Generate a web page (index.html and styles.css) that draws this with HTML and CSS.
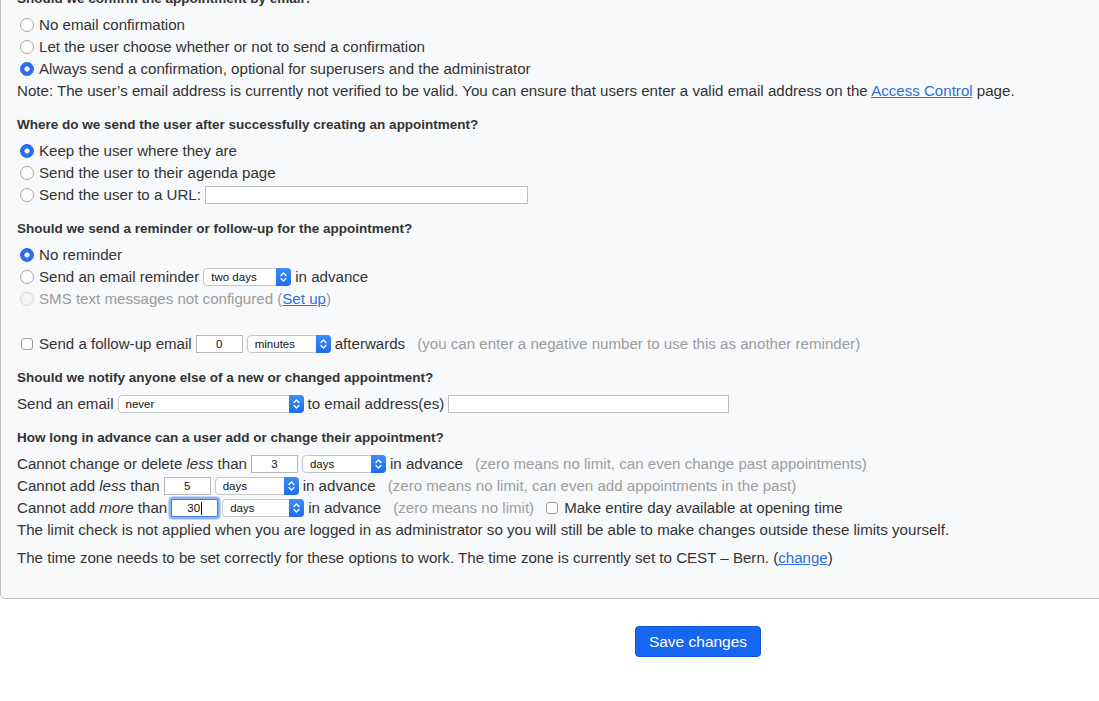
FILE: index.html
```html
<!DOCTYPE html>
<html lang="en">
<head>
<meta charset="utf-8">
<title>Appointment settings</title>
<link rel="stylesheet" href="styles.css">
</head>
<body>
<div class="page">
  <form class="box">
    <section class="sec">
      <h3 class="q">Should we confirm the appointment by email?</h3>
      <label class="row"><input type="radio" name="conf" class="rd"><span>No email confirmation</span></label>
      <label class="row"><input type="radio" name="conf" class="rd"><span>Let the user choose whether or not to send a confirmation</span></label>
      <label class="row"><input type="radio" name="conf" class="rd" checked><span>Always send a confirmation, optional for superusers and the administrator</span></label>
      <div class="row"><span>Note: The user’s email address is currently not verified to be valid. You can ensure that users enter a valid email address on the <a href="#" class="lnk">Access Control</a> page.</span></div>
    </section>

    <section class="sec">
      <h3 class="q">Where do we send the user after successfully creating an appointment?</h3>
      <label class="row"><input type="radio" name="dest" class="rd" checked><span>Keep the user where they are</span></label>
      <label class="row"><input type="radio" name="dest" class="rd"><span>Send the user to their agenda page</span></label>
      <div class="row"><input type="radio" name="dest" class="rd"><span>Send the user to a URL:</span><input type="text" class="txt w323"></div>
    </section>

    <section class="sec">
      <h3 class="q">Should we send a reminder or follow-up for the appointment?</h3>
      <label class="row"><input type="radio" name="rem" class="rd" checked><span>No reminder</span></label>
      <div class="row"><input type="radio" name="rem" class="rd"><span>Send an email reminder</span>
        <span class="sel w88"><select><option>two days</option></select><span class="cap"><svg width="15" height="16" viewBox="0 0 15 16"><path d="M5 6.5 7.5 4 10 6.5M5 9.5 7.5 12 10 9.5" fill="none" stroke="#fff" stroke-width="1.3" stroke-linecap="round" stroke-linejoin="round"/></svg></span></span>
        <span>in advance</span></div>
      <div class="row dis"><input type="radio" name="rem" class="rd" disabled><span>SMS text messages not configured (<a href="#" class="lnk">Set up</a>)</span></div>
      <div class="row follow"><input type="checkbox" class="cb"><span>Send a follow-up email</span>
        <input type="text" class="num" value="0">
        <span class="sel w84"><select><option>minutes</option></select><span class="cap"><svg width="15" height="16" viewBox="0 0 15 16"><path d="M5 6.5 7.5 4 10 6.5M5 9.5 7.5 12 10 9.5" fill="none" stroke="#fff" stroke-width="1.3" stroke-linecap="round" stroke-linejoin="round"/></svg></span></span>
        <span>afterwards</span><span class="hint">(you can enter a negative number to use this as another reminder)</span></div>
    </section>

    <section class="sec">
      <h3 class="q">Should we notify anyone else of a new or changed appointment?</h3>
      <div class="row"><span>Send an email</span>
        <span class="sel w186"><select><option>never</option></select><span class="cap"><svg width="15" height="16" viewBox="0 0 15 16"><path d="M5 6.5 7.5 4 10 6.5M5 9.5 7.5 12 10 9.5" fill="none" stroke="#fff" stroke-width="1.3" stroke-linecap="round" stroke-linejoin="round"/></svg></span></span>
        <span>to email address(es)</span><input type="text" class="txt w281"></div>
    </section>

    <section class="sec last">
      <h3 class="q">How long in advance can a user add or change their appointment?</h3>
      <div class="row"><span>Cannot change or delete <i>less</i> than</span>
        <input type="text" class="num" value="3">
        <span class="sel w84"><select><option>days</option></select><span class="cap"><svg width="15" height="16" viewBox="0 0 15 16"><path d="M5 6.5 7.5 4 10 6.5M5 9.5 7.5 12 10 9.5" fill="none" stroke="#fff" stroke-width="1.3" stroke-linecap="round" stroke-linejoin="round"/></svg></span></span>
        <span>in advance</span><span class="hint">(zero means no limit, can even change past appointments)</span></div>
      <div class="row"><span>Cannot add <i>less</i> than</span>
        <input type="text" class="num" value="5">
        <span class="sel w84"><select><option>days</option></select><span class="cap"><svg width="15" height="16" viewBox="0 0 15 16"><path d="M5 6.5 7.5 4 10 6.5M5 9.5 7.5 12 10 9.5" fill="none" stroke="#fff" stroke-width="1.3" stroke-linecap="round" stroke-linejoin="round"/></svg></span></span>
        <span>in advance</span><span class="hint">(zero means no limit, can even add appointments in the past)</span></div>
      <div class="row"><span>Cannot add <i>more</i> than</span>
        <span class="num focus"><span class="val">30</span><span class="caret"></span></span>
        <span class="sel w82"><select><option>days</option></select><span class="cap"><svg width="15" height="16" viewBox="0 0 15 16"><path d="M5 6.5 7.5 4 10 6.5M5 9.5 7.5 12 10 9.5" fill="none" stroke="#fff" stroke-width="1.3" stroke-linecap="round" stroke-linejoin="round"/></svg></span></span>
        <span>in advance</span><span class="hint">(zero means no limit)</span>
        <input type="checkbox" class="cb cb2"><span>Make entire day available at opening time</span></div>
      <div class="row"><span>The limit check is not applied when you are logged in as administrator so you will still be able to make changes outside these limits yourself.</span></div>
      <div class="row tz"><span>The time zone needs to be set correctly for these options to work. The time zone is currently set to CEST – Bern. (<a href="#" class="lnk">change</a>)</span></div>
    </section>
  </form>

  <div class="actions">
    <button type="button" class="btn">Save changes</button>
  </div>
</div>
</body>
</html>
```

FILE: styles.css
```css
html, body {
  margin: 0;
  padding: 0;
  overflow: hidden;
  background: #fff;
}

.page {
  width: 1396px;
  font-family: "Liberation Sans", Arial, Helvetica, sans-serif;
  font-size: 15.1px;
  color: #333;
}

.box {
  box-sizing: border-box;
  width: 1396px;
  margin-top: -40px;
  padding: 28px 16px 29px 16px;
  background: #f8f9fb;
  border: 1px solid #c2c2c2;
  border-radius: 5px;
}

.sec {
  margin-bottom: 13px;
}

.sec.last {
  margin-bottom: 0;
}

.q {
  margin: 0 0 5px 0;
  font-size: 13.5px;
  font-weight: bold;
  line-height: 20px;
  color: #333;
}

.row {
  display: flex;
  align-items: center;
  gap: 4px;
  height: 22px;
  white-space: nowrap;
  line-height: 22px;
}

.row i {
  font-style: italic;
}

.follow {
  margin-top: 23px;
}

.tz {
  margin-top: 6px;
}

.dis {
  color: #9a9a9a;
}

.lnk {
  color: #2f6fd9;
  text-decoration: underline;
}

.hint {
  margin-left: 8px;
  color: #9d9d9d;
}

/* radios */
.rd {
  appearance: none;
  -webkit-appearance: none;
  box-sizing: border-box;
  width: 14px;
  height: 14px;
  margin: 0 1px 0 3px;
  border: 1px solid #a9a9a9;
  border-radius: 50%;
  background: #fff;
  flex: none;
}

.rd:checked {
  border-color: #1f66e5;
  background: radial-gradient(circle, #fff 0 2.3px, #2a6ff0 2.9px);
}

.rd:disabled {
  border-color: #d6d6d6;
  background: #f6f6f6;
}

/* checkboxes */
.cb {
  appearance: none;
  -webkit-appearance: none;
  box-sizing: border-box;
  width: 12px;
  height: 12px;
  margin: 0 2px 0 4px;
  border: 1px solid #9c9c9c;
  border-radius: 3px;
  background: #fff;
  flex: none;
}

.cb2 {
  margin-left: 8px;
}

/* text inputs */
.txt {
  box-sizing: border-box;
  height: 18px;
  margin: 0;
  padding: 0 3px;
  border: 1px solid #bdbdbd;
  background: #fff;
  font: 12px "Liberation Sans", Arial, sans-serif;
  flex: none;
}

.w323 { width: 323px; }
.w281 { width: 281px; }

.num {
  box-sizing: border-box;
  width: 47px;
  height: 18px;
  margin: 0;
  padding: 0;
  border: 1px solid #b8b8b8;
  background: #fff;
  text-align: center;
  font: 11.5px "Liberation Sans", Arial, sans-serif;
  color: #111;
  flex: none;
}

.num.focus {
  display: inline-flex;
  align-items: center;
  justify-content: center;
  border-color: #3b7ddd;
  border-radius: 2px;
  box-shadow: 0 0 0 2.5px #8fb4f2;
  line-height: 16px;
}

.caret {
  display: inline-block;
  width: 1px;
  height: 13px;
  margin-left: 1px;
  background: #000;
}

/* selects */
.sel {
  display: inline-flex;
  box-sizing: border-box;
  height: 18px;
  border: 1px solid #c6c6c6;
  border-radius: 4px;
  background: #fff;
  flex: none;
}

.w88 { width: 88px; }
.w84 { width: 84px; }
.w82 { width: 82px; }
.w186 { width: 186px; }

.sel select {
  appearance: none;
  -webkit-appearance: none;
  flex: 1;
  min-width: 0;
  height: 16px;
  margin: 0;
  padding: 0 0 0 7px;
  border: 0;
  background: transparent;
  font: 11.5px "Liberation Sans", Arial, sans-serif;
  color: #111;
  outline: none;
}

.cap {
  display: flex;
  align-items: center;
  justify-content: center;
  width: 15px;
  height: 18px;
  margin: -1px -1px -1px 0;
  border-radius: 0 4px 4px 0;
  background: linear-gradient(#3d8cf8, #1e6cf0);
  flex: none;
}

/* actions */
.actions {
  display: flex;
  justify-content: center;
  margin-top: 27px;
}

.btn {
  box-sizing: border-box;
  width: 126px;
  height: 31px;
  padding: 0;
  border: 1px solid #0f55d6;
  border-radius: 4px;
  background: #1766f1;
  color: #fff;
  font: 15.5px "Liberation Sans", Arial, sans-serif;
}
```
